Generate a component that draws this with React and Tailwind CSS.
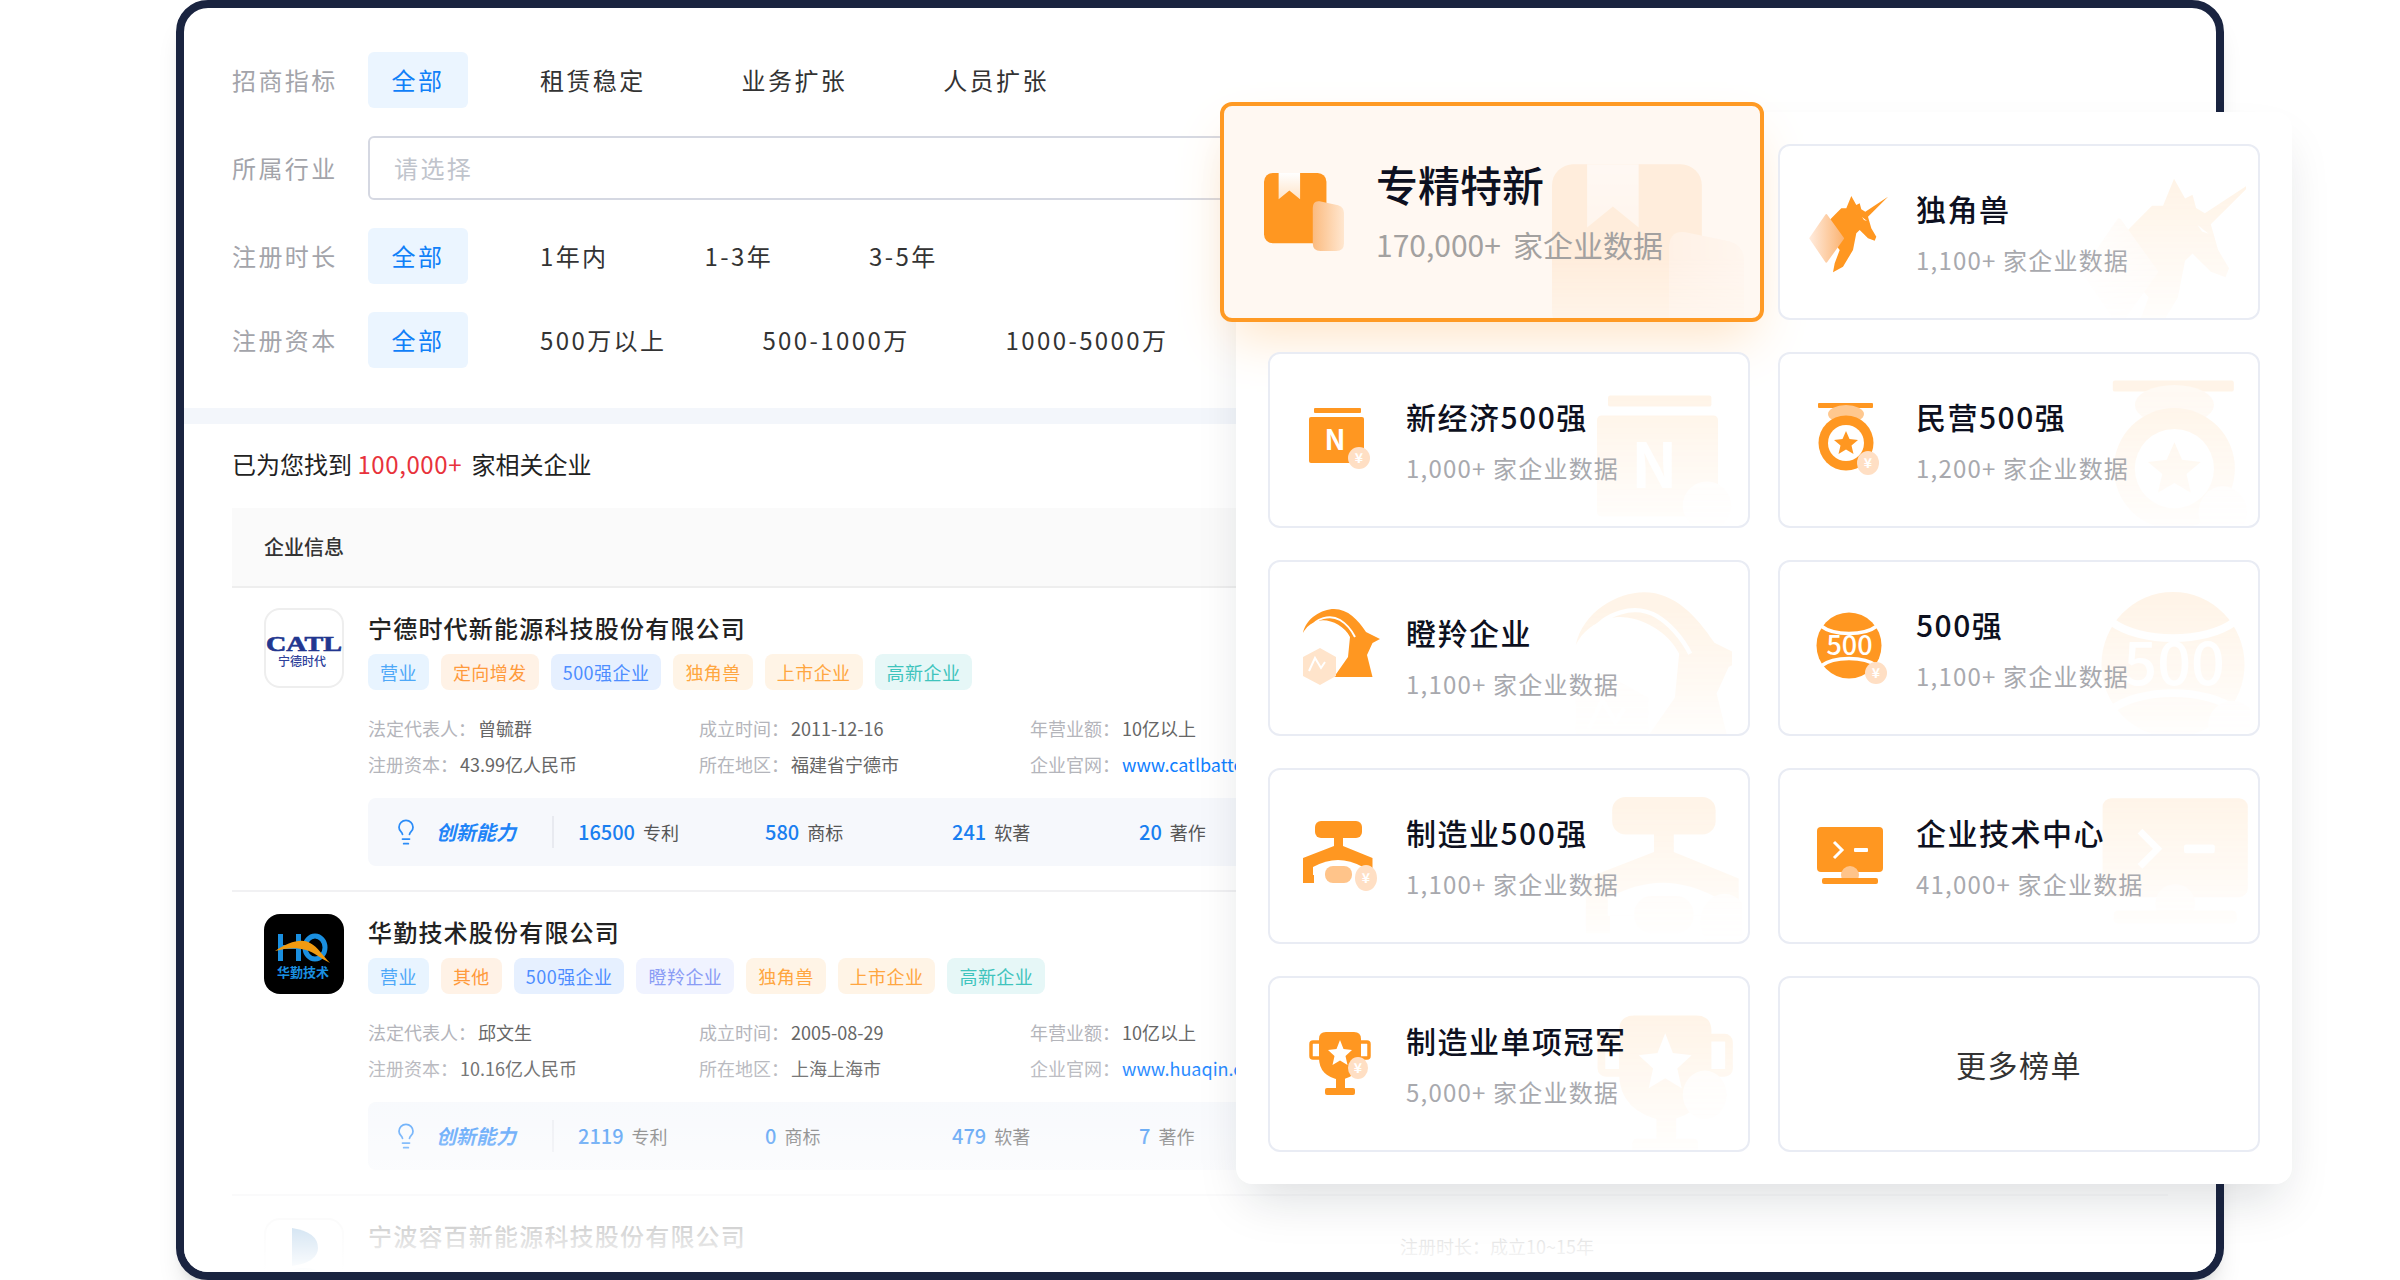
import React from "react";
import { Lightbulb } from "lucide-react";

const O = "#ff9721";
const Ctx = React.createContext(false);

const Coin = ({ x, y, r = 11, ry }) => {
  const plain = React.useContext(Ctx);
  return (
    <g>
      <ellipse cx={x} cy={y} rx={r} ry={ry || r} fill="#ffdfc4" />
      {!plain && <text x={x} y={y + 5} fontSize="14" fontWeight="700" fill="#fff" textAnchor="middle">¥</text>}
    </g>
  );
};

const Svg = ({ children, box = "0 0 80 80" }) => (
  <svg viewBox={box} className="w-full h-full overflow-visible">{children}</svg>
);

const BookIcon = () => (
  <Svg box="0 0 82 80">
    <defs>
      <linearGradient id="bm" x1="0" y1="0" x2="0" y2="1">
        <stop offset="0" stopColor="#fff" />
        <stop offset="1" stopColor="#ffe4c8" />
      </linearGradient>
      <linearGradient id="pg" x1="0" y1="0" x2="1" y2="0">
        <stop offset="0" stopColor="#fbbb80" />
        <stop offset="1" stopColor="#ffe7d0" />
      </linearGradient>
    </defs>
    <rect x="0" y="0" width="64" height="72" rx="9" fill={O} />
    <path d="M15 0H37V27L26 18L15 27Z" fill="url(#bm)" />
    <path d="M50 36Q50 28 57 29L76 33Q82 35 82 41V72Q82 80 74 80H58Q50 80 50 72Z" fill="url(#pg)" />
  </Svg>
);

const UnicornIcon = () => (
  <Svg>
    <defs>
      <linearGradient id="dm" x1="0" y1="0" x2="1" y2="0">
        <stop offset="0" stopColor="#ffeadb" />
        <stop offset="1" stopColor="#fbb473" />
      </linearGradient>
    </defs>
    <path d="M70.7 48.7L64 46.3L55.7 38L52.3 41.3L49 58L39 74.7L29 80.3L30.7 71.3L35.7 58L29 49.7V33L25.7 28L32.3 21.3L37.3 16.3H42.3L47.3 4L52.3 13L55.7 11.3L57.3 17.3L61.3 19.7L84 4.7L64 24.7L67.3 36.3L72.3 44.7Z" fill={O} />
    <path d="M58 25L63 29L60 28Z" fill="#fff" />
    <path d="M22.3 23L39 46.3L22.3 69.7L6.3 46.3Z" fill="url(#dm)" stroke="url(#dm)" strokeWidth="2" strokeLinejoin="round" />
  </Svg>
);

const NIcon = () => (
  <Svg>
    <rect x="20" y="8" width="47" height="5" rx="1" fill={O} />
    <rect x="15" y="17" width="55" height="46" rx="2" fill={O} />
    <text x="41" y="50" fontSize="28" fontWeight="700" fill="#fff" textAnchor="middle">N</text>
    <Coin x={65} y={58} />
  </Svg>
);

const MedalIcon = () => (
  <Svg>
    <rect x="14" y="3" width="55" height="5" rx="1" fill={O} />
    <ellipse cx="42" cy="14" rx="18" ry="9" fill="#ffc88f" />
    <circle cx="42" cy="43" r="27.5" fill={O} />
    <circle cx="42" cy="43" r="18" fill="#fff" />
    <path d="M42 31L45.5 39L54 40L47.5 45.500L49.500 54L42 49.500L34.500 54L36.500 45.500L30 40L38.500 39Z" fill={O} />
    <Coin x={64} y={63} ry={12} />
  </Svg>
);

const GoatIcon = () => (
  <Svg>
    <path d="M9 25C12 10 28 1 40 1C54 1 64 12 72 24L86 31L78.500 35L73 47L78.500 69H40L54 49L56 29C50 17 34 10 24 13C17 15 12 19 9 25Z" fill={O} />
    <path d="M15 21C22 10 36 6 46 12C51 15 57 21 61 29" stroke="#fff" strokeWidth="2" fill="none" />
    <path d="M26 40L42 49V68L26 77L9 68V49Z" fill="#ffe4cb" />
    <path d="M15 63L21 50L27 60L31 54" stroke="#fff" strokeWidth="2" fill="none" />
  </Svg>
);

const BallIcon = () => (
  <Svg>
    <ellipse cx="45" cy="37.500" rx="32.500" ry="33" fill={O} />
    <path d="M17 18C30 28 60 28 73 18" stroke="#fff" strokeWidth="3.500" fill="none" />
    <path d="M17 58C30 48 60 48 73 58" stroke="#fff" strokeWidth="3.500" fill="none" />
    <text x="45.500" y="47" fontSize="27" fontWeight="500" fill="#fff" textAnchor="middle">500</text>
    <Coin x={72} y={65} />
  </Svg>
);

const FactoryIcon = () => (
  <Svg>
    <rect x="21" y="5" width="47" height="17" rx="6" fill={O} />
    <rect x="40" y="20" width="9" height="14" fill={O} />
    <path d="M9 42L40 30H49L78.500 42V67H68V59H20V67H9Z" fill={O} />
    <path d="M19 59V51Q32 44 44 44Q56 44 69 51V59Z" fill="#fff" />
    <rect x="31" y="50" width="27" height="17" rx="8" fill="#ffc48a" />
    <Coin x={72} y={62} r={11} ry={13} />
  </Svg>
);

const TechIcon = () => (
  <Svg>
    <rect x="13" y="11" width="66" height="45" rx="4" fill={O} />
    <path d="M30 26L38 34L30 42" stroke="#fff" strokeWidth="3" fill="none" />
    <rect x="50" y="32" width="14" height="4" rx="1" fill="#fff" />
    <ellipse cx="46" cy="59" rx="9" ry="9" fill="#ffc48a" />
    <rect x="18" y="62" width="56" height="6" rx="2" fill={O} />
  </Svg>
);

const TrophyIcon = () => (
  <Svg>
    <rect x="17" y="18" width="58" height="16" rx="2" fill="none" stroke={O} strokeWidth="3.500" />
    <path d="M32 8H60Q67 8 67 15V34Q67 52 46 56Q25 52 25 34V15Q25 8 32 8Z" fill={O} />
    <path d="M46 16L49.500 25L58 26L51.500 32L53.500 41L46 36.500L38.500 41L40.500 32L34 26L42.500 25Z" fill="#fff" />
    <rect x="42" y="54" width="9" height="11" fill={O} />
    <rect x="31" y="64" width="30" height="7" rx="2" fill={O} />
    <Coin x={64} y={44} r={10} ry={11} />
  </Svg>
);

const Tab = ({ children }) => (
  <button className="h-14 w-25 rounded-md bg-[#ebf5ff] text-[#1080f8] text-2xl tracking-widest">{children}</button>
);

const Opt = ({ children }) => (
  <span className="px-6 text-2xl tracking-widest text-[#333]">{children}</span>
);

const FilterRow = ({ label, children }) => (
  <div className="flex items-center gap-10 whitespace-nowrap">
    <span className="w-24 text-2xl tracking-widest text-[#a3a4aa]">{label}</span>
    {children}
  </div>
);

const tagStyles = {
  blue: "bg-[#e8f4ff] text-[#4ea8f8]",
  orange: "bg-[#fff2e6] text-[#ff9a3c]",
  indigo: "bg-[#e6f0ff] text-[#4d8dff]",
  amber: "bg-[#fff4e6] text-[#ffa640]",
  teal: "bg-[#e6f7f7] text-[#3fc4bd]",
  violet: "bg-[#f0f3ff] text-[#8a9cf5]",
};

const Tag = ({ tone, children }) => (
  <span className={`h-9 px-3 flex items-center rounded-lg text-lg tracking-wide ${tagStyles[tone]}`}>{children}</span>
);

const Detail = ({ label, value, link }) => (
  <div className="text-lg leading-7 whitespace-nowrap">
    <span className="text-[#b4b5bb]">{label}：</span>
    <span className={`ml-0.5 ${link ? "text-[#1080ff]" : "text-[#666]"}`}>{value}</span>
  </div>
);

const Stat = ({ n, unit }) => (
  <div className="w-[187px] shrink-0 flex items-center gap-2">
    <span className="text-xl font-medium text-[#1a7ff0]">{n}</span>
    <span className="text-lg text-[#555]">{unit}</span>
  </div>
);

const CatlLogo = () => (
  <div className="w-20 h-20 shrink-0 rounded-2xl border-2 border-[#eeeeee] bg-white overflow-hidden">
    <svg viewBox="0 0 76 76" className="w-full h-full overflow-visible">
      <text x="0" y="41" fontSize="20" fontWeight="700" fill="#22368f" stroke="#22368f" strokeWidth="0.6" fontFamily="Liberation Serif" textLength="76" lengthAdjust="spacingAndGlyphs">CATL</text>
      <text x="36" y="56" fontSize="12" fontWeight="500" fill="#2d3f9a" textAnchor="middle">宁德时代</text>
    </svg>
  </div>
);

const HqLogo = () => (
  <div className="w-20 h-20 mt-0.5 shrink-0 rounded-2xl bg-black overflow-hidden">
    <svg viewBox="0 0 80 80" className="w-full h-full">
      <rect x="14" y="20" width="5" height="27" fill="#1a8fe0" />
      <rect x="32" y="20" width="5" height="27" fill="#1a8fe0" />
      <rect x="14" y="31" width="23" height="4" fill="#1a8fe0" />
      <ellipse cx="51" cy="33.500" rx="10" ry="11.500" fill="none" stroke="#1a8fe0" strokeWidth="5" />
      <path d="M11 37C24 28 38 24 46 29C54 33 59 42 66 49C56 44 50 38 42 36C32 33 22 34 11 37Z" fill="#f09a10" />
      <text x="39" y="63" fontSize="13" fontWeight="700" fill="#1a8fe0" textAnchor="middle">华勤技术</text>
    </svg>
  </div>
);

const NbLogo = () => (
  <div className="w-20 h-20 mt-0.5 shrink-0 rounded-2xl border-2 border-[#eeeeee] overflow-hidden">
    <svg viewBox="0 0 76 76" className="w-full h-full">
      <path d="M26 8Q52 12 52 28Q52 42 26 46Z" fill="#2f7fc4" />
      <ellipse cx="38" cy="54" rx="16" ry="6" fill="#2f7fc4" />
    </svg>
  </div>
);

const Company = ({ logo, name, tags, rep, date, rev, cap, area, url, stats }) => (
  <div className="flex gap-6 pl-8 pt-5 pb-6 border-b-2 border-[#f1f1f3]">
    {logo}
    <div className="flex-1 min-w-0">
      <div className="text-2xl leading-10 font-medium tracking-wider text-[#222] whitespace-nowrap">{name}</div>
      <div className="mt-1.5 flex gap-3 whitespace-nowrap">
        {tags.map(([t, tone]) => <Tag key={t} tone={tone}>{t}</Tag>)}
      </div>
      <div className="mt-6 grid grid-cols-[repeat(3,331px)] gap-y-2">
        <Detail label="法定代表人" value={rep} />
        <Detail label="成立时间" value={date} />
        <Detail label="年营业额" value={rev} />
        <Detail label="注册资本" value={cap} />
        <Detail label="所在地区" value={area} />
        <Detail label="企业官网" value={url} link />
      </div>
      <div className="mt-5 h-17 pl-6 flex items-center rounded-lg bg-[#f6f8fc] whitespace-nowrap">
        <Lightbulb className="w-7 h-7 text-[#2b8cf8]" strokeWidth={1.5} />
        <span className="ml-4 text-xl font-bold italic text-[#1f84f7]">创新能力</span>
        <span className="ml-9 mr-6 w-0.5 h-8 bg-[#e8eaf0]" />
        {stats.map(([n, u]) => <Stat key={u} n={n} unit={u} />)}
      </div>
    </div>
  </div>
);

const Card = ({ Icon, title, sub, mark, low }) => (
  <div className="relative h-44 rounded-xl border-2 border-[#e9ecf4] bg-white overflow-hidden flex items-center gap-8 pl-6 whitespace-nowrap">
    <div className={`absolute w-44 h-44 opacity-10 [mask-image:linear-gradient(to_bottom,black_10%,transparent_95%)] ${mark}`}>
      <Ctx.Provider value={true}><Icon /></Ctx.Provider>
    </div>
    <div className="relative w-20 h-20 shrink-0"><Icon /></div>
    <div className={`relative flex flex-col gap-4 ${low ? "mt-4" : ""}`}>
      <div className="text-3xl leading-10 tracking-wider font-medium text-[#0d1020]">{title}</div>
      <div className="text-2xl leading-8 tracking-wider text-[#a8a9ae]">{sub}</div>
    </div>
  </div>
);

export default function App() {
  return (
    <div className="relative w-full h-320 overflow-hidden bg-white font-['Noto_Sans_CJK_SC',sans-serif]">
      <div className="relative mx-auto w-512 h-320 border-8 border-[#1a2440] rounded-4xl overflow-hidden bg-white shadow-xl">
        <div className="flex flex-col gap-7 px-12 pt-11 pb-10">
          <FilterRow label="招商指标">
            <div className="flex items-center gap-12">
              <Tab>全部</Tab>
              <Opt>租赁稳定</Opt>
              <Opt>业务扩张</Opt>
              <Opt>人员扩张</Opt>
            </div>
          </FilterRow>
          <FilterRow label="所属行业">
            <div className="flex-1 h-16 px-6 flex items-center rounded-md border-2 border-[#d5d8e2] text-2xl tracking-widest text-[#c0c4cc]">请选择</div>
          </FilterRow>
          <FilterRow label="注册时长">
            <div className="flex items-center gap-12">
              <Tab>全部</Tab>
              <Opt>1年内</Opt>
              <Opt>1-3年</Opt>
              <Opt>3-5年</Opt>
            </div>
          </FilterRow>
          <FilterRow label="注册资本">
            <div className="flex items-center gap-12">
              <Tab>全部</Tab>
              <Opt>500万以上</Opt>
              <Opt>500-1000万</Opt>
              <Opt>1000-5000万</Opt>
            </div>
          </FilterRow>
        </div>
        <div className="h-4 bg-[#f3f6fb]" />
        <div className="px-12 pt-6">
          <div className="text-2xl leading-8 text-[#222]">
            已为您找到 <span className="mr-1 tracking-wide text-[#e8323c]">100,000+</span> 家相关企业
          </div>
          <div className="mt-7 h-20 pl-8 flex items-center bg-[#fafafa] border-b-2 border-[#eeeeee] text-xl font-medium text-[#333]">企业信息</div>
          <Company
            logo={<CatlLogo />}
            name="宁德时代新能源科技股份有限公司"
            tags={[["营业", "blue"], ["定向增发", "orange"], ["500强企业", "indigo"], ["独角兽", "amber"], ["上市企业", "amber"], ["高新企业", "teal"]]}
            rep="曾毓群" date="2011-12-16" rev="10亿以上" cap="43.99亿人民币" area="福建省宁德市" url="www.catlbattery.com"
            stats={[["16500", "专利"], ["580", "商标"], ["241", "软著"], ["20", "著作"]]}
          />
          <Company
            logo={<HqLogo />}
            name="华勤技术股份有限公司"
            tags={[["营业", "blue"], ["其他", "orange"], ["500强企业", "indigo"], ["瞪羚企业", "violet"], ["独角兽", "amber"], ["上市企业", "amber"], ["高新企业", "teal"]]}
            rep="邱文生" date="2005-08-29" rev="10亿以上" cap="10.16亿人民币" area="上海上海市" url="www.huaqin.com"
            stats={[["2119", "专利"], ["0", "商标"], ["479", "软著"], ["7", "著作"]]}
          />
          <div className="flex gap-6 pl-8 pt-5 whitespace-nowrap">
            <NbLogo />
            <div className="flex items-start">
              <div className="w-256 text-2xl leading-10 font-medium tracking-wider text-[#222]">宁波容百新能源科技股份有限公司</div>
              <div className="ml-2 mt-4 text-lg leading-7 text-[#555]">注册时长：成立10~15年</div>
            </div>
          </div>
        </div>
        <div className="absolute inset-x-0 bottom-0 h-56 bg-linear-to-t from-white to-transparent" />
      </div>

      <div className="absolute top-28 right-27 w-264 rounded-2xl bg-white shadow-2xl shadow-gray-900/15">
        <div className="grid grid-cols-2 gap-x-7 gap-y-8 p-8">
          <div className="relative h-44">
            <div className="absolute -left-12 -right-3.5 -top-10.5 -bottom-0.5 z-10 rounded-xl border-4 border-[#ff9a24] bg-[#fff8f2] overflow-hidden flex items-center gap-8 pl-10 whitespace-nowrap">
              <div className="absolute right-4 top-14 w-48 h-48 opacity-10 [mask-image:linear-gradient(to_bottom,black_50%,transparent)]">
                <BookIcon />
              </div>
              <div className="relative w-20 h-20 shrink-0"><BookIcon /></div>
              <div className="relative flex flex-col gap-4">
                <div className="text-[42px] leading-12 font-medium text-[#0d1020]">专精特新</div>
                <div className="text-3xl leading-10 text-[#a3a1a0]">170,000+<span className="ml-3">家企业数据</span></div>
              </div>
            </div>
            <div className="absolute -left-12 -right-3.5 -top-10.5 -bottom-0.5 rounded-xl shadow-2xl shadow-orange-300/40" />
          </div>
          <Card Icon={UnicornIcon} title="独角兽" sub="1,100+ 家企业数据" mark="right-3 top-6" />
          <Card Icon={NIcon} title="新经济500强" sub="1,000+ 家企业数据" mark="right-2 top-6" />
          <Card Icon={MedalIcon} title="民营500强" sub="1,200+ 家企业数据" mark="right-0 top-5" />
          <Card Icon={GoatIcon} title="瞪羚企业" sub="1,100+ 家企业数据" mark="right-4 top-7" low />
          <Card Icon={BallIcon} title="500强" sub="1,100+ 家企业数据" mark="right-2 top-5" />
          <Card Icon={FactoryIcon} title="制造业500强" sub="1,100+ 家企业数据" mark="right-1.5 top-4" />
          <Card Icon={TechIcon} title="企业技术中心" sub="41,000+ 家企业数据" mark="right-2 top-1" />
          <Card Icon={TrophyIcon} title="制造业单项冠军" sub="5,000+ 家企业数据" mark="right-2 top-5" />
          <div className="h-44 rounded-xl border-2 border-[#e9ecf4] flex items-center justify-center text-3xl tracking-wider text-[#333]">更多榜单</div>
        </div>
      </div>
    </div>
  );
}
